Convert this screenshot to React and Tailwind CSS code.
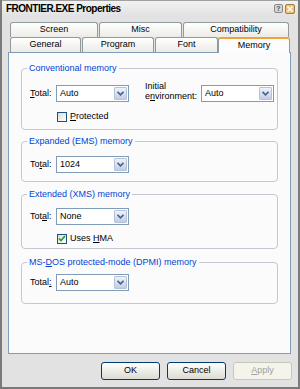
import React from 'react';

const font = { fontFamily: '"Liberation Sans", Arial, sans-serif' };

function Combo({ value, width = 'w-[73px]' }) {
  return (
    <div className={`${width} h-[17px] flex items-stretch border border-[#7f9db9] bg-white`}>
      <span className="flex-1 pl-[3px] text-[9px] leading-[15px] text-black">{value}</span>
      <span className="w-[13px] m-[1px] flex items-center justify-center rounded-[1px] border border-[#b4c2dc] bg-gradient-to-b from-[#eef2fb] to-[#c2cde6]">
        <svg width="7" height="5" viewBox="0 0 7 5">
          <path d="M0.5 0.8 L3.5 3.8 L6.5 0.8" fill="none" stroke="#4d6185" strokeWidth="1.6" />
        </svg>
      </span>
    </div>
  );
}

function Check({ checked, children }) {
  return (
    <div className="flex items-center gap-[3px]">
      <span className="w-[10px] h-[10px] border border-[#1c5180] bg-gradient-to-br from-[#dcdcd7] to-white flex items-center justify-center">
        {checked && (
          <svg width="8" height="7" viewBox="0 0 8 7">
            <path d="M1 3.5 L3 5.5 L7 1" fill="none" stroke="#21a121" strokeWidth="1.6" />
          </svg>
        )}
      </span>
      <span className="text-[9px] text-black">{children}</span>
    </div>
  );
}

function Group({ title, h, mt, children }) {
  return (
    <div className={`relative mx-[12px] ${mt} ${h} rounded-[4px] border border-[#c5c8d0]`}>
      <span className="absolute -top-[7px] left-[5px] bg-[#fbfbfc] px-[2px] text-[9px] leading-[12px] text-[#0046d5]">{title}</span>
      {children}
    </div>
  );
}

function Tab({ label, w, first }) {
  return (
    <div
      className={`${w} ${first ? '' : 'ml-[1px]'} h-[15px] flex items-center justify-center rounded-t-[3px] border border-b-0 border-[#919b9c] bg-gradient-to-b from-white to-[#ecebe6] text-[9px] text-black`}
    >
      {label}
    </div>
  );
}

function Btn({ label, disabled }) {
  return (
    <div
      className={`w-[59px] h-[18px] flex items-center justify-center rounded-[3px] border ${disabled ? 'border-[#c9c7ba] text-[#a0a0a0] bg-[#f5f4ea]' : 'border-[#003c74] text-black bg-gradient-to-b from-white to-[#dcdcd2]'} text-[9px]`}
    >
      {label}
    </div>
  );
}

export default function App() {
  return (
    <div style={font} className="w-[300px] h-[389px] bg-[#e2e2e2] border-l-[2px] border-r-[2px] border-b-[2px] border-[#7a7a7a] flex flex-col overflow-hidden">
      <div className="h-[16px] flex items-center justify-between pl-[4px] pr-[3px] bg-gradient-to-b from-[#f2f2f2] to-[#e2e2e2] border-t border-[#a0a0a0]">
        <span className="text-[10px] font-bold tracking-[-0.5px] text-black">FRONTIER.EXE Properties</span>
        <div className="flex gap-[2px]">
          <span className="w-[9px] h-[9px] rounded-[2px] border border-[#888] bg-[#d6d6d6] text-[7px] leading-[8px] text-center font-bold text-[#555]">?</span>
          <span className="w-[10px] h-[10px] rounded-[2px] border border-[#a08040] bg-[#f0c070] flex items-center justify-center">
            <svg width="6" height="6" viewBox="0 0 6 6"><path d="M0.5 0.5 L5.5 5.5 M5.5 0.5 L0.5 5.5" stroke="#fff" strokeWidth="1.5" /></svg>
          </span>
        </div>
      </div>

      <div className="px-[6px] pt-[6px]">
        <div className="flex pl-[2px]">
          <Tab label="Screen" w="w-[88px]" first />
          <Tab label="Misc" w="w-[83px]" />
          <Tab label="Compatibility" w="w-[106px]" />
        </div>
        <div className="flex pl-[2px] items-end">
          <Tab label="General" w="w-[71px]" first />
          <Tab label="Program" w="w-[72px]" />
          <Tab label="Font" w="w-[63px]" />
          <div className="w-[72px] h-[16px] -mb-[1px] relative z-10 flex items-center justify-center rounded-t-[3px] border border-b-0 border-[#919b9c] border-t-[2px] border-t-[#f1a33b] bg-[#fcfcfe] text-[9px] text-black">
            Memory
          </div>
        </div>

        <div className="w-[283px] h-[302px] border border-[#7f9db9] bg-[#fbfbfc] pt-px">
          <Group title="Conventional memory" mt="mt-[14px]" h="h-[62px]">
            <div className="flex items-start pt-[16px] pl-[8px]">
              <span className="text-[9px] leading-[17px] w-[26px]"><u>T</u>otal:</span>
              <Combo value="Auto" />
              <span className="text-[9px] leading-[10px] ml-[16px] -mt-[4px] w-[56px]">Initial<br />e<u>n</u>vironment:</span>
              <Combo value="Auto" />
            </div>
            <div className="pl-[35px] pt-[8px]">
              <Check><u>P</u>rotected</Check>
            </div>
          </Group>
          <Group title="Expanded (EMS) memory" mt="mt-[11px]" h="h-[41px]">
            <div className="flex items-center pt-[14px] pl-[8px]">
              <span className="text-[9px] w-[26px]">To<u>t</u>al:</span>
              <Combo value="1024" />
            </div>
          </Group>
          <Group title="Extended (XMS) memory" mt="mt-[12px]" h="h-[55px]">
            <div className="flex items-center pt-[13px] pl-[8px]">
              <span className="text-[9px] w-[26px]">Tot<u>a</u>l:</span>
              <Combo value="None" />
            </div>
            <div className="pl-[35px] pt-[7px]">
              <Check checked>Uses <u>H</u>MA</Check>
            </div>
          </Group>
          <Group title={<>MS-<u>D</u>OS protected-mode (DPMI) memory</>} mt="mt-[13px]" h="h-[42px]">
            <div className="flex items-center pt-[11px] pl-[8px]">
              <span className="text-[9px] w-[26px]">Total<u>:</u></span>
              <Combo value="Auto" />
            </div>
          </Group>
        </div>

        <div className="flex justify-end gap-[7px] pt-[8px]">
          <Btn label="OK" />
          <Btn label="Cancel" />
          <Btn label={<><u>A</u>pply</>} disabled />
        </div>
      </div>
    </div>
  );
}
